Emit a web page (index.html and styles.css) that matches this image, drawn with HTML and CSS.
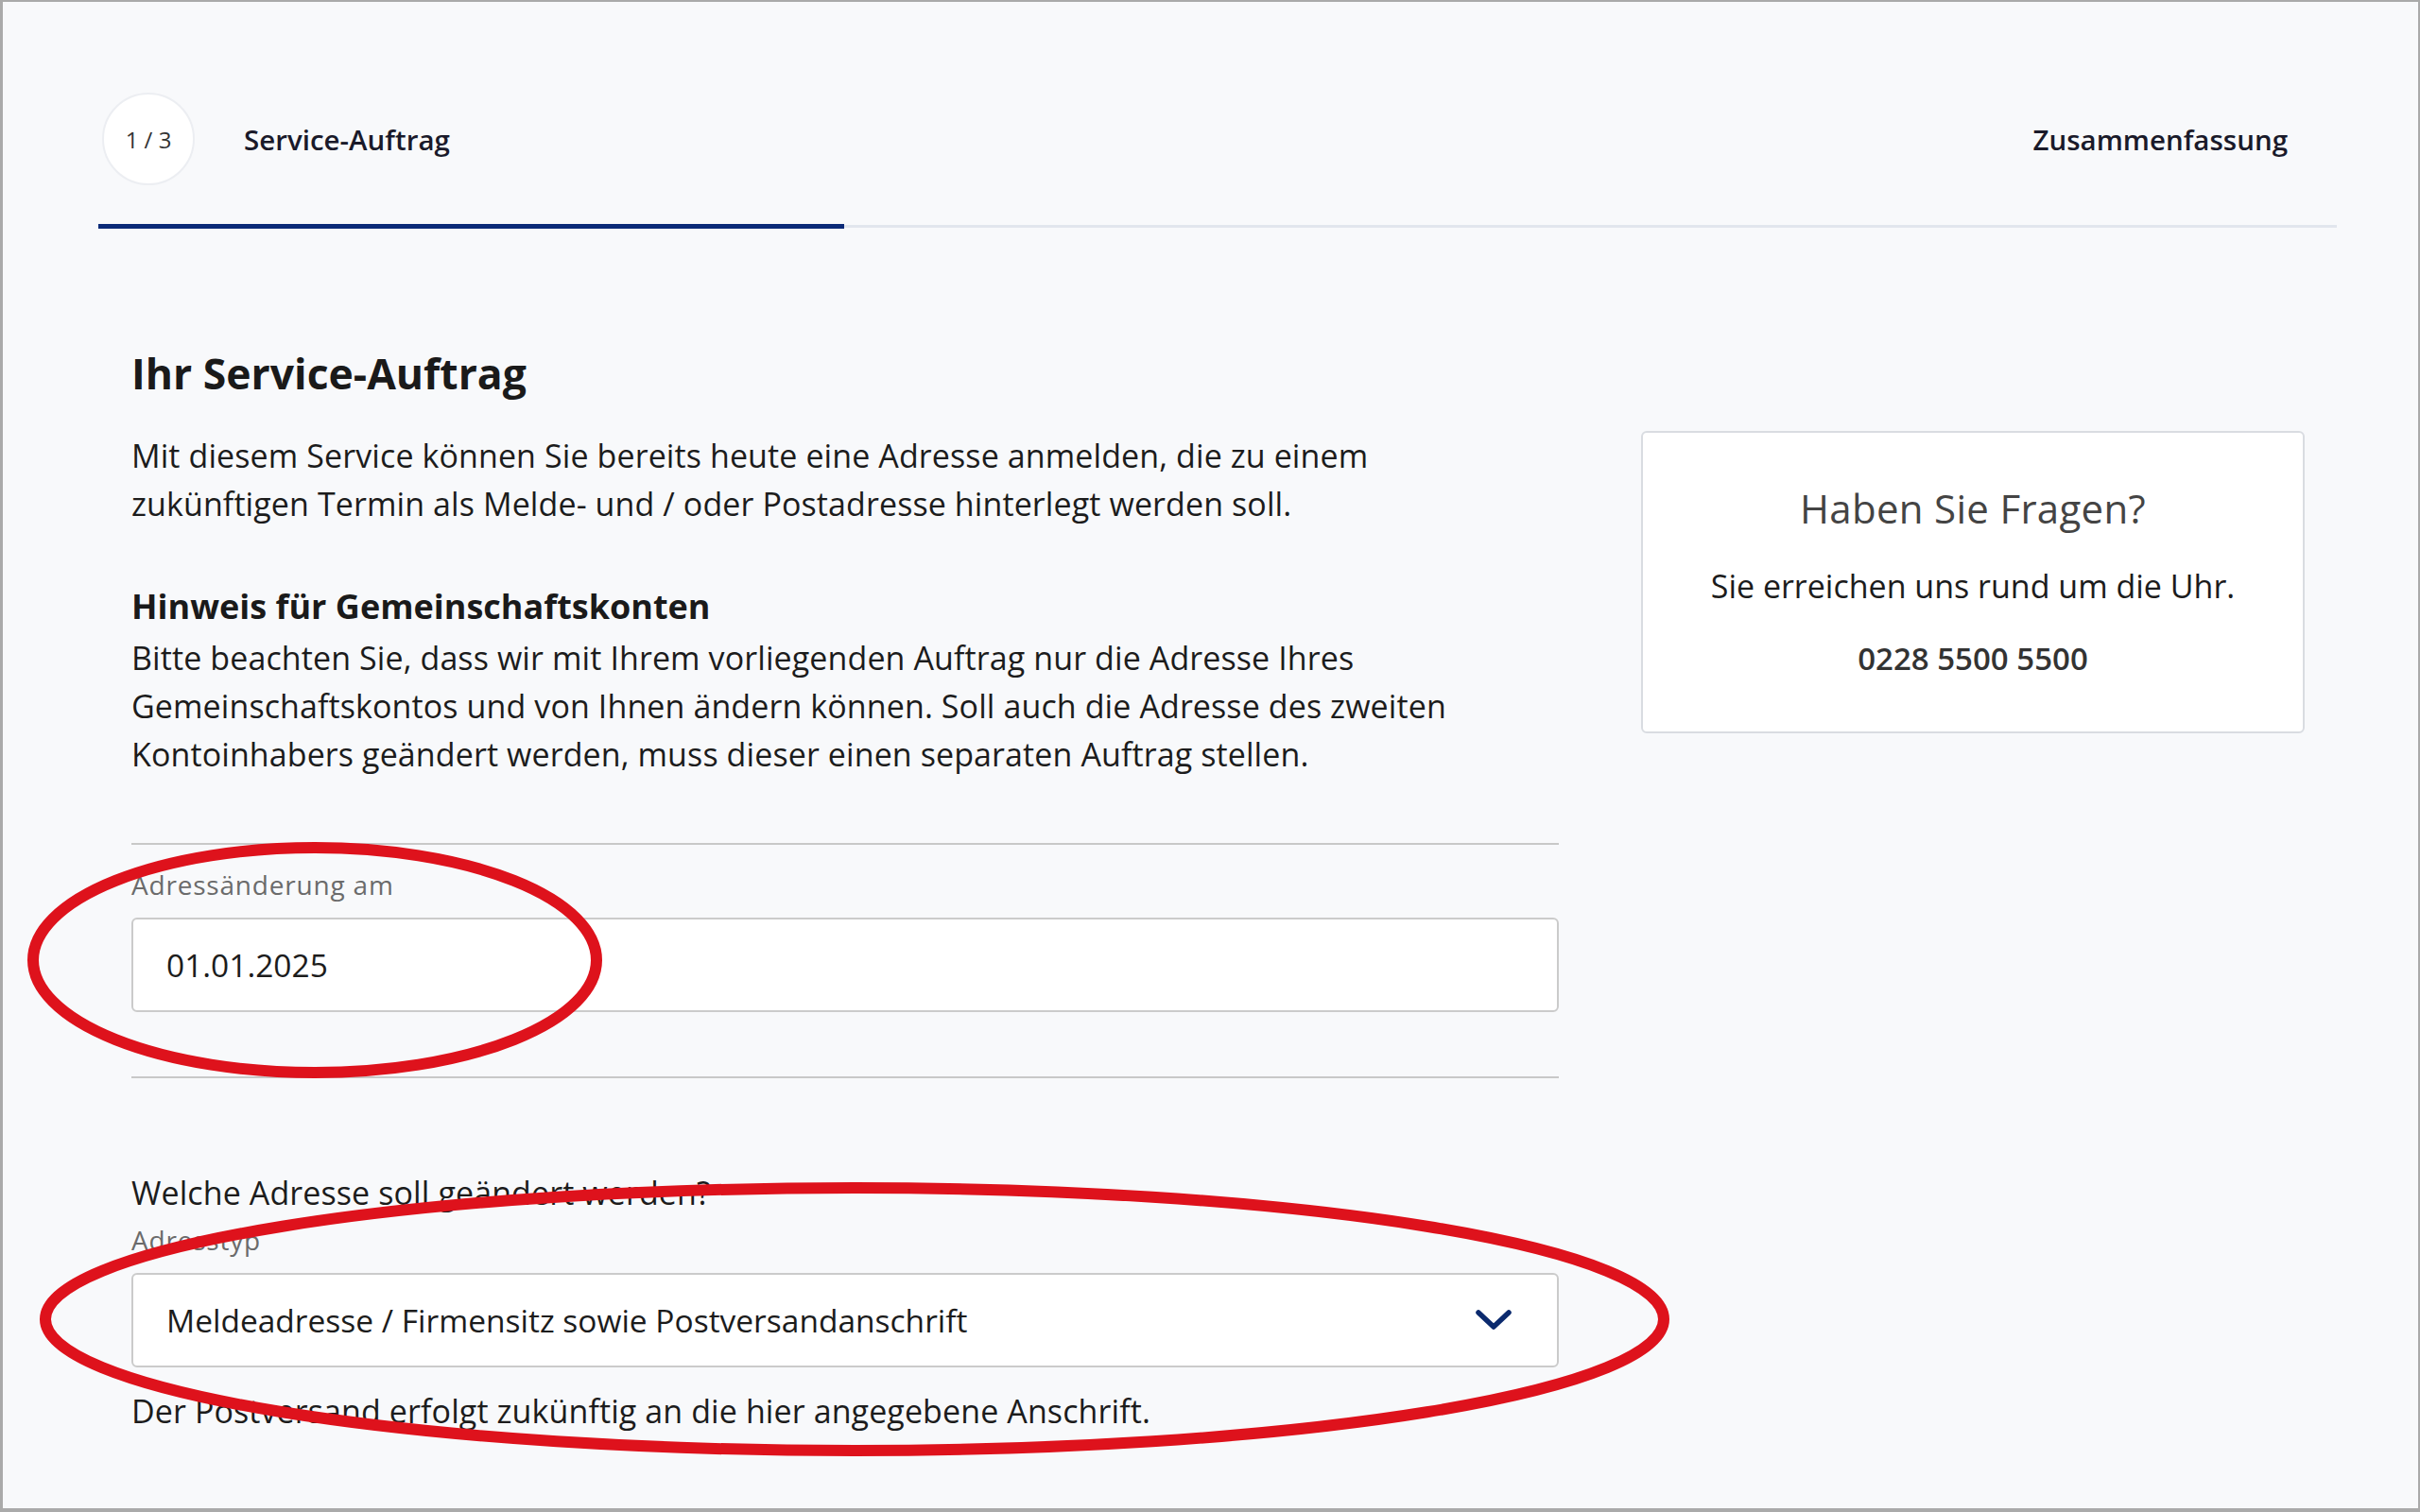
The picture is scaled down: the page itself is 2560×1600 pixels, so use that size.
FILE: index.html
```html
<!DOCTYPE html>
<html lang="de">
<head>
<meta charset="utf-8">
<title>Service-Auftrag</title>
<link rel="stylesheet" href="styles.css">
</head>
<body>
<div class="frame">
  <div class="stepper">
    <div class="steps">
      <div class="step-current">
        <div class="step-count">1 / 3</div>
        <div class="step-label">Service-Auftrag</div>
      </div>
      <div class="step-label">Zusammenfassung</div>
    </div>
    <div class="progress">
      <div class="progress-fill"></div>
      <div class="progress-rest"></div>
    </div>
  </div>

  <div class="content">
    <div class="main">
      <h1 class="title">Ihr Service-Auftrag</h1>
      <p class="text intro">Mit diesem Service können Sie bereits heute eine Adresse anmelden, die zu einem<br>zukünftigen Termin als Melde- und / oder Postadresse hinterlegt werden soll.</p>
      <h2 class="subtitle">Hinweis für Gemeinschaftskonten</h2>
      <p class="text note">Bitte beachten Sie, dass wir mit Ihrem vorliegenden Auftrag nur die Adresse Ihres<br>Gemeinschaftskontos und von Ihnen ändern können. Soll auch die Adresse des zweiten<br>Kontoinhabers geändert werden, muss dieser einen separaten Auftrag stellen.</p>

      <div class="divider divider-top"></div>
      <div class="field-label">Adressänderung am</div>
      <div class="field">01.01.2025</div>
      <div class="divider divider-bottom"></div>

      <p class="text question">Welche Adresse soll geändert werden?</p>
      <div class="field-label field-label-tight">Adresstyp</div>
      <div class="field select">
        <span>Meldeadresse / Firmensitz sowie Postversandanschrift</span>
        <svg class="chevron" width="40" height="24" viewBox="0 0 40 24" aria-hidden="true">
          <path d="M4 4 L20 19 L36 4" fill="none" stroke="#0b2a6e" stroke-width="5.5" stroke-linecap="round" stroke-linejoin="round"/>
        </svg>
      </div>
      <p class="text hint">Der Postversand erfolgt zukünftig an die hier angegebene Anschrift.</p>
    </div>

    <aside class="aside">
      <div class="card">
        <div class="card-title">Haben Sie Fragen?</div>
        <div class="card-text">Sie erreichen uns rund um die Uhr.</div>
        <div class="card-phone">0228 5500 5500</div>
      </div>
    </aside>
  </div>

  <svg class="marks" width="2560" height="1600" viewBox="0 0 2560 1600" aria-hidden="true">
    <ellipse cx="333" cy="1016" rx="298" ry="119" fill="none" stroke="#de121c" stroke-width="12"/>
    <ellipse cx="904" cy="1396" rx="856" ry="139" fill="none" stroke="#de121c" stroke-width="12"/>
  </svg>
</div>
</body>
</html>
```

FILE: styles.css
```css
* { box-sizing: border-box; }

html, body {
  margin: 0;
  padding: 0;
}

body {
  font-family: "Open Sans", "Noto Sans", Arial, sans-serif;
  color: #1c1c1c;
  background: #f8f9fb;
}

.frame {
  position: relative;
  height: 1600px;
  background: #f8f9fb;
  border-style: solid;
  border-color: #aaaaaa;
  border-width: 2px 2px 4px 3px;
  overflow: hidden;
}

/* Stepper */
.stepper {
  margin: 0 86px 0 101px;
  padding-top: 96px;
}

.steps {
  display: flex;
  align-items: center;
  justify-content: space-between;
  padding: 0 52px 0 4px;
}

.step-current {
  display: flex;
  align-items: center;
  gap: 52px;
}

.step-count {
  width: 98px;
  height: 98px;
  border: 2px solid #eceef2;
  border-radius: 50%;
  background: #ffffff;
  display: flex;
  align-items: center;
  justify-content: center;
  font-size: 24px;
  font-weight: 500;
  color: #333333;
}

.step-label {
  font-size: 29.5px;
  font-weight: 600;
  color: #1a1a2a;
}

.progress {
  margin-top: 41px;
  display: flex;
  align-items: center;
  height: 5px;
}

.progress-fill {
  width: 789px;
  height: 5px;
  background: #0b2a78;
}

.progress-rest {
  flex: 1;
  height: 3px;
  background: #e2e6ed;
}

/* Content */
.content {
  display: flex;
  gap: 87px;
  margin: 125px 0 0 136px;
}

.main {
  width: 1510px;
  flex: none;
}

.title {
  margin: 0;
  font-size: 44.5px;
  line-height: 56px;
  font-weight: 700;
  color: #1a1a1a;
}

.text {
  margin: 0;
  font-size: 34px;
  line-height: 51px;
  letter-spacing: 0.1px;
  white-space: nowrap;
  color: #1c1c1c;
}

.intro { margin-top: 34px; }

.subtitle {
  margin: 57px 0 0;
  font-size: 36px;
  line-height: 51px;
  font-weight: 700;
  color: #1a1a1a;
}

.note { margin-top: 4px; }

.divider {
  height: 2px;
  background: #c8c8c8;
}

.divider-top { margin-top: 68px; }
.divider-bottom { margin-top: 68px; }

.field-label {
  margin-top: 24px;
  font-size: 28px;
  line-height: 36px;
  letter-spacing: 0.8px;
  color: #6b6b6b;
}

.field-label-tight { margin-top: 6px; }

.field {
  margin-top: 17px;
  height: 100px;
  border: 2px solid #cbcbcb;
  border-radius: 6px;
  background: #ffffff;
  padding: 0 47px 0 35px;
  display: flex;
  align-items: center;
  font-size: 33.5px;
  color: #1c1c1c;
}

.select {
  justify-content: space-between;
}

.chevron { flex: none; }

.question { margin-top: 96px; }

.hint { margin-top: 21px; }

/* Aside card */
.aside {
  width: 702px;
  flex: none;
  padding-top: 89px;
}

.card {
  background: #ffffff;
  border: 2px solid #d9dce1;
  border-radius: 6px;
  text-align: center;
  padding: 56px 0 53px;
}

.card-title {
  font-size: 42px;
  line-height: 48px;
  letter-spacing: 0.3px;
  color: #444444;
}

.card-text {
  margin-top: 34px;
  font-size: 34px;
  line-height: 48px;
  color: #1c1c1c;
}

.card-phone {
  margin-top: 29px;
  font-size: 33px;
  line-height: 48px;
  font-weight: 600;
  color: #333333;
}

/* Annotation overlay */
.marks {
  position: absolute;
  top: -2px;
  left: -3px;
  pointer-events: none;
}
```
